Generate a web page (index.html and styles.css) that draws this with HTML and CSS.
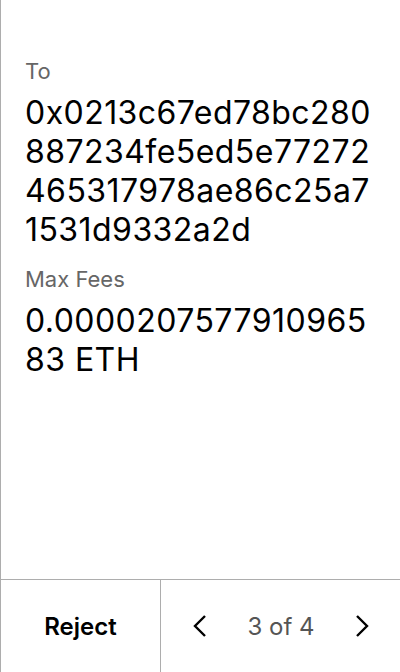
FILE: index.html
```html
<!DOCTYPE html>
<html>
<head>
<meta charset="utf-8">
<link rel="stylesheet" href="styles.css">
</head>
<body>
<div class="screen">
  <div class="content">
    <div class="label">To</div>
    <div class="value">0x0213c67ed78bc280887234fe5ed5e77272465317978ae86c25a71531d9332a2d</div>
    <div class="label">Max Fees</div>
    <div class="value">0.000020757791096583 ETH</div>
  </div>
  <div class="footer">
    <button class="reject">Reject</button>
    <div class="pager">
      <svg class="chev" width="16" height="22" viewBox="0 0 16 22"><path d="M13 1 L3 11 L13 21" fill="none" stroke="#000" stroke-width="2.4"/></svg>
      <span class="count">3 of 4</span>
      <svg class="chev" width="16" height="22" viewBox="0 0 16 22"><path d="M3 1 L13 11 L3 21" fill="none" stroke="#000" stroke-width="2.4"/></svg>
    </div>
  </div>
</div>
</body>
</html>
```
FILE: styles.css
```css
html, body { margin: 0; padding: 0; background: #fff; }
body { font-family: Inter, "Noto Sans", sans-serif; }
.screen {
  width: 400px; height: 672px; box-sizing: border-box;
  border-left: 1px solid #adadad;
  display: flex; flex-direction: column;
}
.content { flex: 1; padding: 57px 23px 0 24px; }
.label { font-size: 22px; line-height: 28px; color: #666; }
.value { font-size: 32px; line-height: 39px; letter-spacing: 0.45px; color: #000; word-break: break-all; margin: 8px 0 16px; }
.footer {
  height: 92px; border-top: 1px solid #adadad;
  display: flex;
}
.reject {
  width: 160px; border: 0; background: none; border-right: 1px solid #adadad;
  font-family: inherit; font-size: 24px; font-weight: 600; color: #000; padding: 0;
}
.pager { flex: 1; display: flex; align-items: center; justify-content: space-between; padding: 0 30px 0 31px; }
.count { font-size: 24px; color: #555; }
.chev { display: block; }
```
